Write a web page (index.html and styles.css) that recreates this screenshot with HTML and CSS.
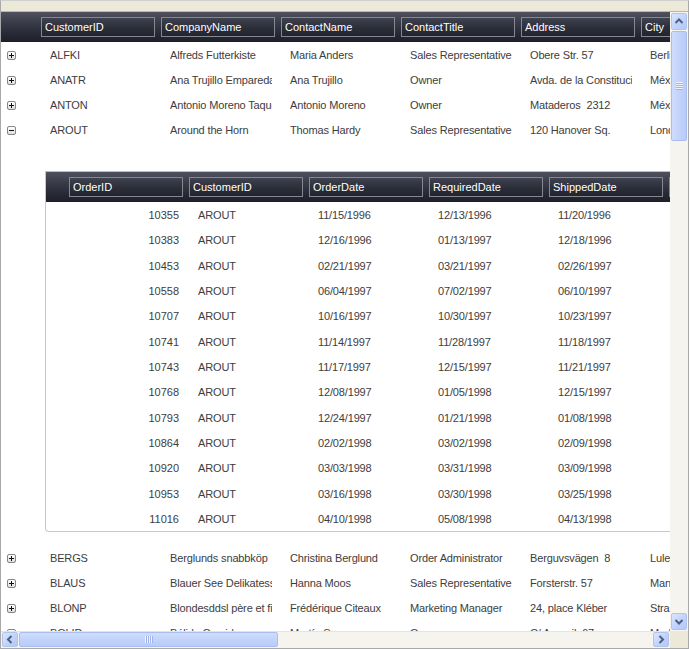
FILE: index.html
```html
<!DOCTYPE html>
<html>
<head>
<meta charset="utf-8">
<link rel="stylesheet" href="styles.css">
</head>
<body>
<div class="frame">
  <div class="groupbar"></div>
  <div class="main">
    <div class="viewport">
      <div class="hdr">
        <div class="hdr-indent"></div>
        <div class="hcell">CustomerID</div>
        <div class="hcell">CompanyName</div>
        <div class="hcell">ContactName</div>
        <div class="hcell">ContactTitle</div>
        <div class="hcell">Address</div>
        <div class="hcell">City</div>
      </div>

      <div class="row"><div class="exp"><span class="toggle plus"></span></div><div class="cell">ALFKI</div><div class="cell">Alfreds Futterkiste</div><div class="cell">Maria Anders</div><div class="cell">Sales Representative</div><div class="cell">Obere Str. 57</div><div class="cell">Berlin</div></div>
      <div class="row"><div class="exp"><span class="toggle plus"></span></div><div class="cell">ANATR</div><div class="cell">Ana Trujillo Emparedados y helados</div><div class="cell">Ana Trujillo</div><div class="cell">Owner</div><div class="cell">Avda. de la Constitución 2222</div><div class="cell">México D.F.</div></div>
      <div class="row"><div class="exp"><span class="toggle plus"></span></div><div class="cell">ANTON</div><div class="cell">Antonio Moreno Taquería</div><div class="cell">Antonio Moreno</div><div class="cell">Owner</div><div class="cell">Mataderos  2312</div><div class="cell">México D.F.</div></div>
      <div class="row"><div class="exp"><span class="toggle"></span></div><div class="cell">AROUT</div><div class="cell">Around the Horn</div><div class="cell">Thomas Hardy</div><div class="cell">Sales Representative</div><div class="cell">120 Hanover Sq.</div><div class="cell">London</div></div>

      <div class="detail-wrap">
        <div class="detail">
          <div class="dhdr">
            <div class="dhdr-indent"></div>
            <div class="hcell">OrderID</div>
            <div class="hcell">CustomerID</div>
            <div class="hcell">OrderDate</div>
            <div class="hcell">RequiredDate</div>
            <div class="hcell">ShippedDate</div>
            <div class="hcell">ShipVia</div>
          </div>
          <div class="drow"><div class="dindent"></div><div class="cell num">10355</div><div class="cell">AROUT</div><div class="cell">11/15/1996</div><div class="cell">12/13/1996</div><div class="cell">11/20/1996</div></div>
          <div class="drow"><div class="dindent"></div><div class="cell num">10383</div><div class="cell">AROUT</div><div class="cell">12/16/1996</div><div class="cell">01/13/1997</div><div class="cell">12/18/1996</div></div>
          <div class="drow"><div class="dindent"></div><div class="cell num">10453</div><div class="cell">AROUT</div><div class="cell">02/21/1997</div><div class="cell">03/21/1997</div><div class="cell">02/26/1997</div></div>
          <div class="drow"><div class="dindent"></div><div class="cell num">10558</div><div class="cell">AROUT</div><div class="cell">06/04/1997</div><div class="cell">07/02/1997</div><div class="cell">06/10/1997</div></div>
          <div class="drow"><div class="dindent"></div><div class="cell num">10707</div><div class="cell">AROUT</div><div class="cell">10/16/1997</div><div class="cell">10/30/1997</div><div class="cell">10/23/1997</div></div>
          <div class="drow"><div class="dindent"></div><div class="cell num">10741</div><div class="cell">AROUT</div><div class="cell">11/14/1997</div><div class="cell">11/28/1997</div><div class="cell">11/18/1997</div></div>
          <div class="drow"><div class="dindent"></div><div class="cell num">10743</div><div class="cell">AROUT</div><div class="cell">11/17/1997</div><div class="cell">12/15/1997</div><div class="cell">11/21/1997</div></div>
          <div class="drow"><div class="dindent"></div><div class="cell num">10768</div><div class="cell">AROUT</div><div class="cell">12/08/1997</div><div class="cell">01/05/1998</div><div class="cell">12/15/1997</div></div>
          <div class="drow"><div class="dindent"></div><div class="cell num">10793</div><div class="cell">AROUT</div><div class="cell">12/24/1997</div><div class="cell">01/21/1998</div><div class="cell">01/08/1998</div></div>
          <div class="drow"><div class="dindent"></div><div class="cell num">10864</div><div class="cell">AROUT</div><div class="cell">02/02/1998</div><div class="cell">03/02/1998</div><div class="cell">02/09/1998</div></div>
          <div class="drow"><div class="dindent"></div><div class="cell num">10920</div><div class="cell">AROUT</div><div class="cell">03/03/1998</div><div class="cell">03/31/1998</div><div class="cell">03/09/1998</div></div>
          <div class="drow"><div class="dindent"></div><div class="cell num">10953</div><div class="cell">AROUT</div><div class="cell">03/16/1998</div><div class="cell">03/30/1998</div><div class="cell">03/25/1998</div></div>
          <div class="drow"><div class="dindent"></div><div class="cell num">11016</div><div class="cell">AROUT</div><div class="cell">04/10/1998</div><div class="cell">05/08/1998</div><div class="cell">04/13/1998</div></div>
        </div>
      </div>

      <div class="row"><div class="exp"><span class="toggle plus"></span></div><div class="cell">BERGS</div><div class="cell">Berglunds snabbköp</div><div class="cell">Christina Berglund</div><div class="cell">Order Administrator</div><div class="cell">Berguvsvägen  8</div><div class="cell">Luleå</div></div>
      <div class="row"><div class="exp"><span class="toggle plus"></span></div><div class="cell">BLAUS</div><div class="cell">Blauer See Delikatessen</div><div class="cell">Hanna Moos</div><div class="cell">Sales Representative</div><div class="cell">Forsterstr. 57</div><div class="cell">Mannheim</div></div>
      <div class="row"><div class="exp"><span class="toggle plus"></span></div><div class="cell">BLONP</div><div class="cell">Blondesddsl père et fils</div><div class="cell">Frédérique Citeaux</div><div class="cell">Marketing Manager</div><div class="cell">24, place Kléber</div><div class="cell">Strasbourg</div></div>
      <div class="row"><div class="exp"><span class="toggle plus"></span></div><div class="cell">BOLID</div><div class="cell">Bólido Comidas preparadas</div><div class="cell">Martín Sommer</div><div class="cell">Owner</div><div class="cell">C/ Araquil, 67</div><div class="cell">Madrid</div></div>
    </div>

    <div class="vscroll">
      <div class="sbtn"><svg width="14" height="15" viewBox="0 0 14 15"><path d="M3.5 9 L7 5.5 L10.5 9" fill="none" stroke="#4d6185" stroke-width="2"/></svg></div>
      <div class="vthumb"><div class="vgrip"></div></div>
      <div class="vtrack"></div>
      <div class="sbtn"><svg width="14" height="15" viewBox="0 0 14 15"><path d="M3.5 6 L7 9.5 L10.5 6" fill="none" stroke="#4d6185" stroke-width="2"/></svg></div>
    </div>
  </div>
  <div class="hbar">
    <div class="hscroll">
      <div class="sbtn hbtn"><svg width="14" height="13" viewBox="0 0 14 13"><path d="M8.5 3 L5 6.5 L8.5 10" fill="none" stroke="#4d6185" stroke-width="2"/></svg></div>
      <div class="hthumb"><div class="hgrip"></div></div>
      <div class="htrack"></div>
      <div class="sbtn hbtn"><svg width="14" height="13" viewBox="0 0 14 13"><path d="M5.5 3 L9 6.5 L5.5 10" fill="none" stroke="#4d6185" stroke-width="2"/></svg></div>
    </div>
    <div class="corner"></div>
  </div>
</div>
</body>
</html>
```

FILE: styles.css
```css
* { box-sizing: border-box; }
html, body { margin: 0; padding: 0; background: #fff; }
body {
  font-family: "Liberation Sans", Arial, sans-serif;
  font-size: 11px;
  color: #3d3d3d;
}
.frame {
  width: 689px;
  height: 649px;
  border: 1px solid #a9a9a9;
  border-top-color: #d0d0d0;
  display: flex;
  flex-direction: column;
  background: #fff;
  overflow: hidden;
}
.groupbar {
  height: 11px;
  flex: none;
  background: #ece9d8;
  border-bottom: 1px solid #b9b7ab;
}
.main { flex: 1; display: flex; min-height: 0; }
.viewport { flex: 1; min-width: 0; overflow: hidden; background: #fff; }

/* header bands */
.hdr, .dhdr {
  display: flex;
  width: max-content;
  height: 30px;
  padding-top: 5px;
  background: linear-gradient(#4f525e 0%, #373a46 40%, #262833 75%, #1d1f28 100%);
}
.hdr-indent { width: 40px; flex: none; }
.dhdr-indent { width: 23px; flex: none; }
.hcell {
  flex: none;
  width: 114px;
  height: 20px;
  margin-right: 6px;
  border: 1px solid #858893;
  background: linear-gradient(#3f4250, #2a2c37 60%, #22242e);
  color: #fff;
  line-height: 18px;
  padding-left: 3px;
  white-space: nowrap;
  overflow: hidden;
}

/* master rows */
.row {
  display: flex;
  width: max-content;
  height: 25px;
  background: #fff;
}
.exp {
  width: 40px;
  flex: none;
  display: flex;
  align-items: center;
  padding-left: 6px;
  padding-top: 1px;
}
.toggle {
  position: relative;
  display: block;
  width: 9px;
  height: 9px;
  border: 1px solid #868686;
  border-radius: 2px;
  background: linear-gradient(#ffffff, #dedede);
}
.toggle::before {
  content: "";
  position: absolute;
  left: 1px;
  top: 3px;
  width: 5px;
  height: 1px;
  background: #111;
}
.toggle.plus::after {
  content: "";
  position: absolute;
  left: 3px;
  top: 1px;
  width: 1px;
  height: 5px;
  background: #111;
}
.cell {
  flex: none;
  width: 102px;
  margin: 0 9px;
  padding-top: 1px;
  line-height: 25px;
  letter-spacing: -0.15px;
  white-space: pre;
  overflow: hidden;
}
.cell.num { text-align: right; margin: 0 10px 0 8px; letter-spacing: 0; }

/* detail */
.detail-wrap {
  padding: 29px 0 13px 44px;
}
.detail {
  width: 790px;
  border-left: 1px solid #c4c8d2;
  border-top: 1px solid #b9bdc9;
  border-bottom: 1px solid #c4c8d2;
  border-bottom-left-radius: 4px;
  background: #fff;
}
.drow {
  display: flex;
  height: 25.33px;
}
.dindent { width: 23px; flex: none; }

/* scrollbars */
.vscroll {
  width: 18px;
  flex: none;
  background: #f5f4ef;
  display: flex;
  flex-direction: column;
  padding: 1px;
}
.sbtn {
  flex: none;
  width: 16px;
  height: 17px;
  border: 1px solid #b1c4f0;
  border-radius: 2px;
  background: linear-gradient(135deg, #dbe6fe, #bfd1fa 60%, #b3c8f6);
  display: flex;
  align-items: center;
  justify-content: center;
}
.vthumb {
  flex: none;
  height: 110px;
  margin-top: 1px;
  border: 1px solid #a9bdee;
  border-radius: 2px;
  background: linear-gradient(to right, #cfdcfd, #c2d3fb 50%, #b8cbf7);
  display: flex;
  align-items: center;
  justify-content: center;
}
.vgrip {
  width: 7px;
  height: 8px;
  background: repeating-linear-gradient(to bottom, #eef3ff 0 1px, #9db3ea 1px 2px);
}
.vtrack { flex: 1; }

.hbar { height: 17px; flex: none; display: flex; }
.hscroll {
  flex: 1;
  background: #f5f4ef;
  border-top: 1px solid #e6e4dc;
  display: flex;
  padding: 0 1px 1px 1px;
}
.hbtn { width: 16px; height: 15px; }
.hthumb {
  flex: none;
  width: 259px;
  height: 15px;
  margin-left: 1px;
  border: 1px solid #a9bdee;
  border-radius: 2px;
  background: linear-gradient(#cfdcfd, #c2d3fb 50%, #b8cbf7);
  display: flex;
  align-items: center;
  justify-content: center;
}
.hgrip {
  width: 8px;
  height: 7px;
  background: repeating-linear-gradient(to right, #eef3ff 0 1px, #9db3ea 1px 2px);
}
.htrack { flex: 1; }
.corner { width: 18px; flex: none; background: #ece9d8; }
```
